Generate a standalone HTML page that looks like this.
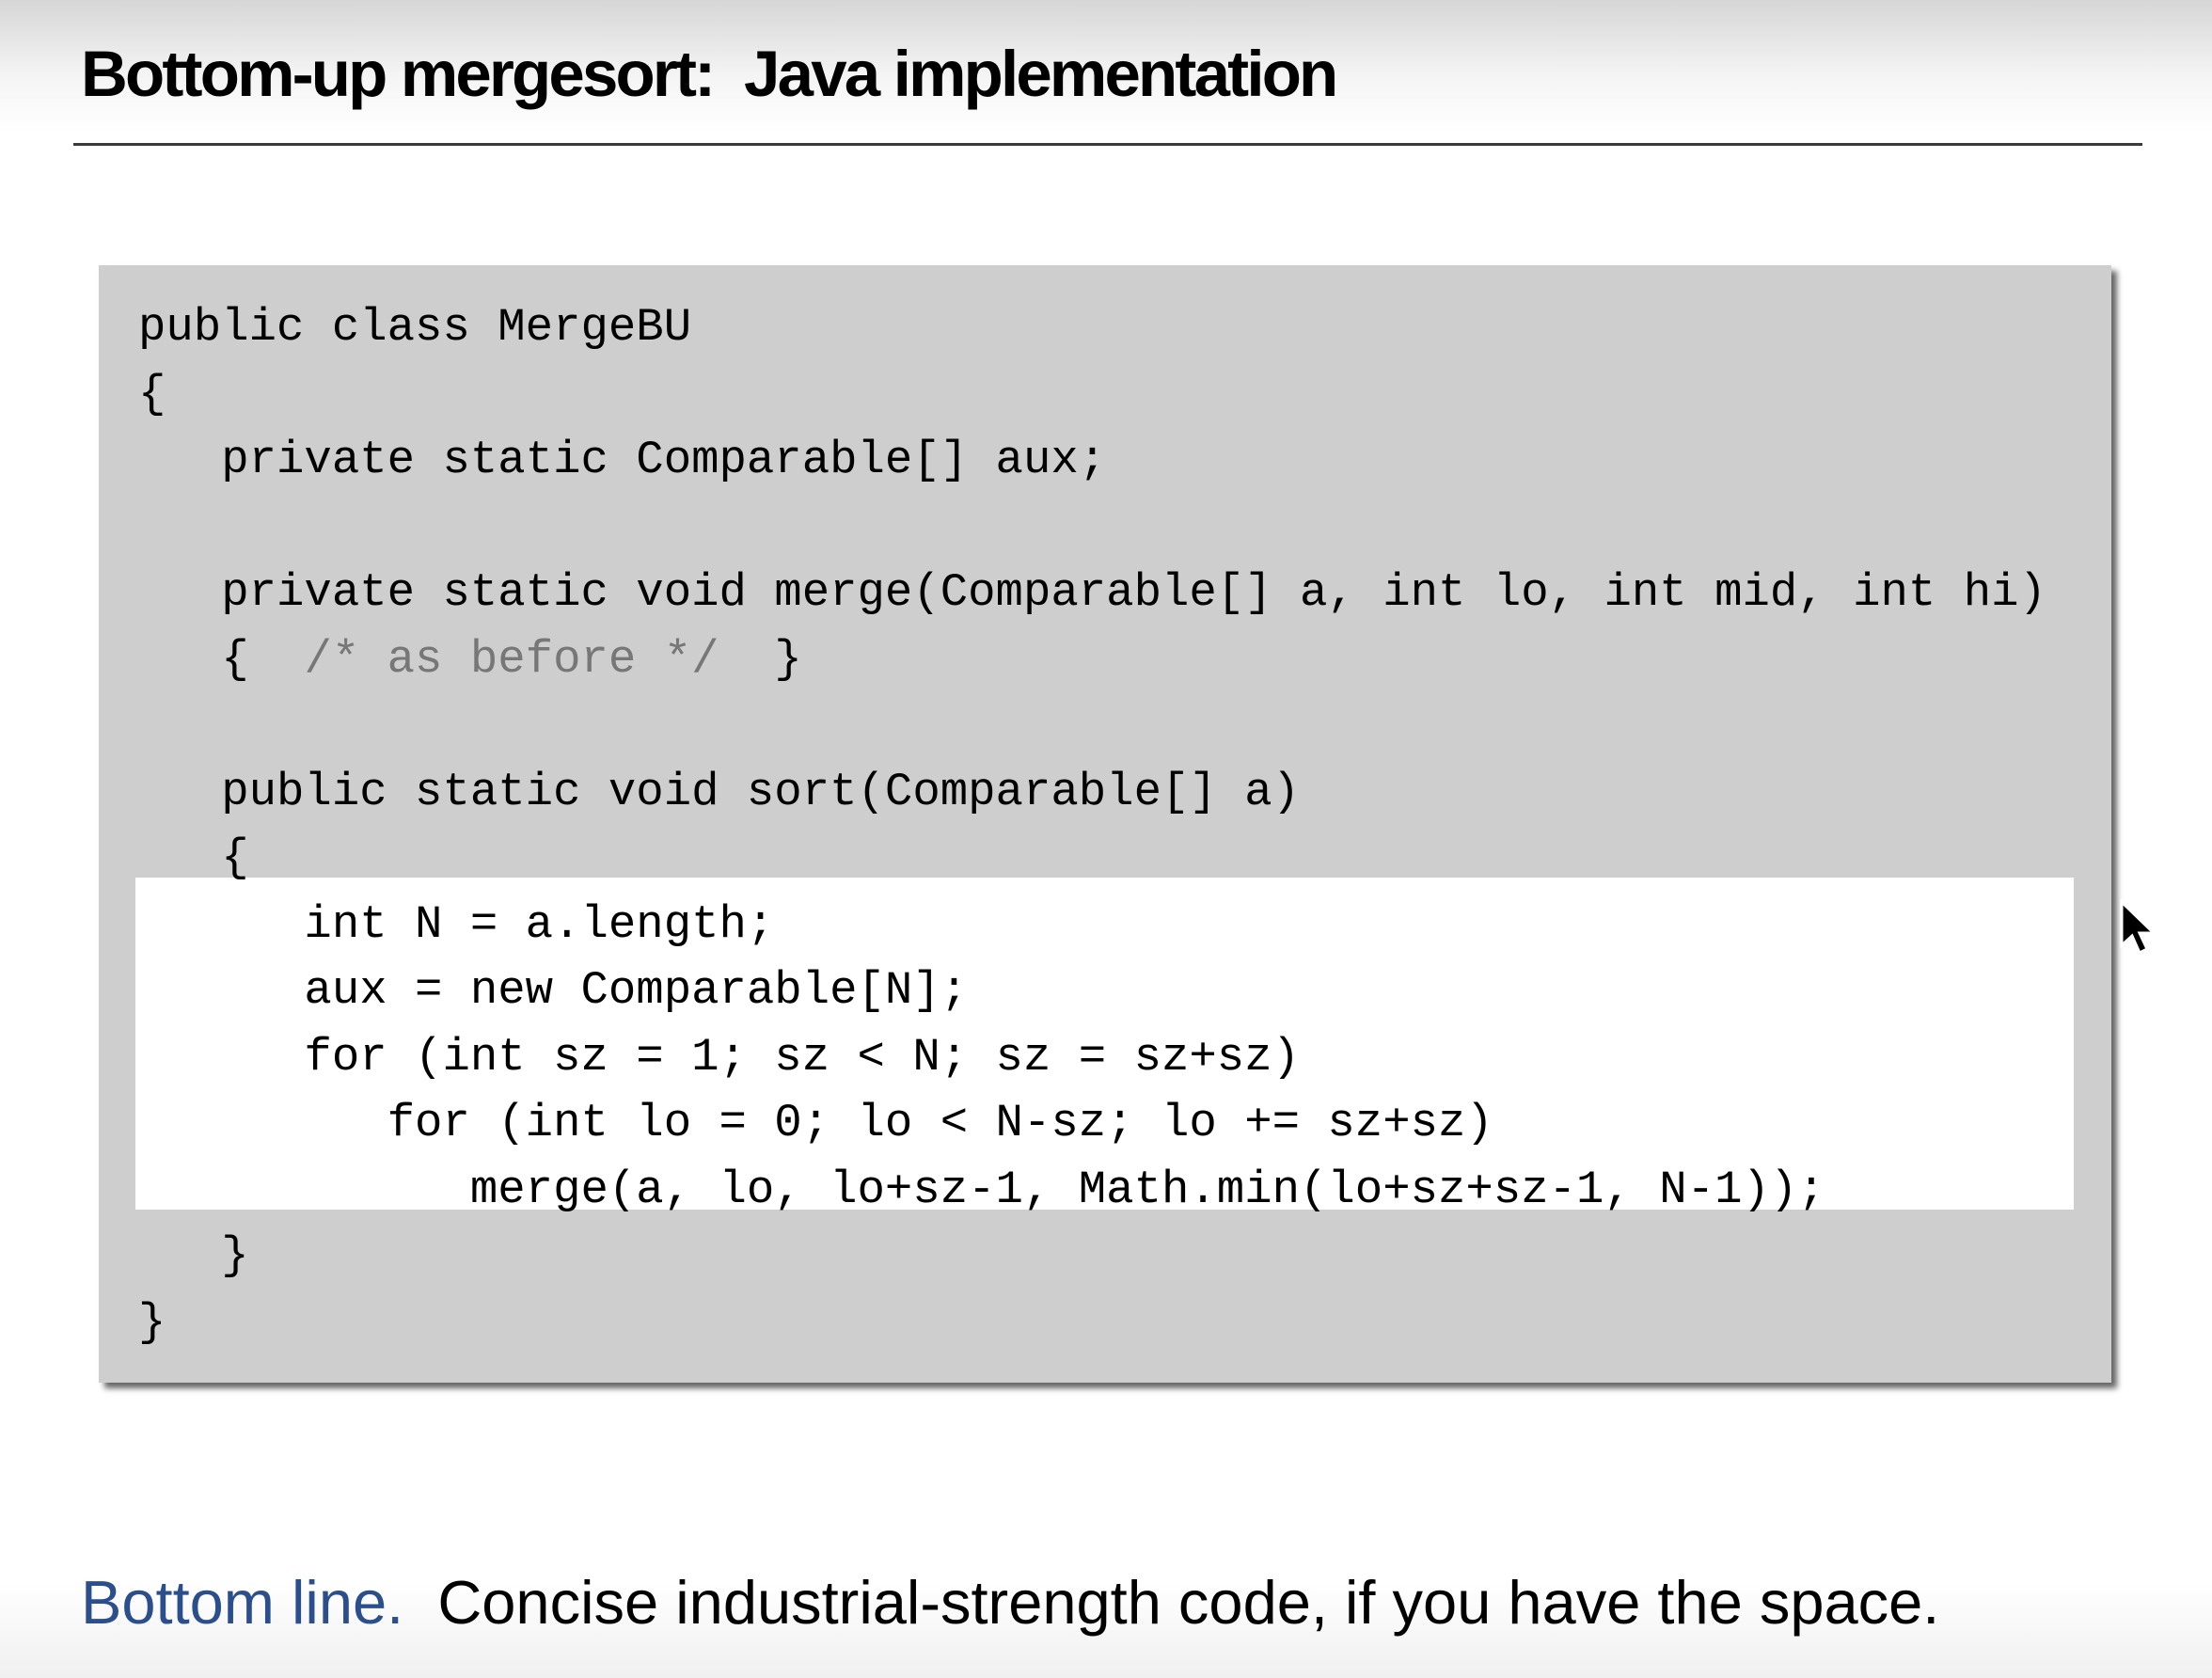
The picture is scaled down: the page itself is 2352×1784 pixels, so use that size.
<!DOCTYPE html>
<html><head><meta charset="utf-8"><style>
html,body{margin:0;padding:0}
body{width:2352px;height:1784px;position:relative;overflow:hidden;background:linear-gradient(#d6d6d6 0px,#f4f4f4 80px,#fff 140px,#fff 1680px,#f0f0f0 1784px);font-family:"Liberation Sans",sans-serif}
.title{position:absolute;left:86px;top:39px;font-size:69px;font-weight:bold;letter-spacing:-2.8px;color:#000;white-space:nowrap}
.rule{position:absolute;left:78px;top:152px;width:2200px;height:3px;background:#3a3a3a}
.box{position:absolute;left:105px;top:282px;width:2140px;height:1188px;background:#cecece;box-shadow:6px 6px 6px rgba(0,0,0,.6)}
.band{position:absolute;left:144px;top:933px;width:2061px;height:353px;background:#fff}
pre{position:absolute;left:147px;top:313px;margin:0;font-family:"Liberation Mono",monospace;font-size:49px;line-height:70.5px;color:#000}
.c{color:#777}
.bot{position:absolute;left:86px;top:1666px;font-size:65px;color:#000;white-space:nowrap}
.bot span{color:#2b4f8c}
</style></head><body>
<div class="title">Bottom-up mergesort:&nbsp; Java implementation</div>
<div class="rule"></div>
<div class="box"></div>
<div class="band"></div>
<pre>public class MergeBU
{
   private static Comparable[] aux;

   private static void merge(Comparable[] a, int lo, int mid, int hi)
   {  <span class="c">/* as before */</span>  }

   public static void sort(Comparable[] a)
   {
      int N = a.length;
      aux = new Comparable[N];
      for (int sz = 1; sz &lt; N; sz = sz+sz)
         for (int lo = 0; lo &lt; N-sz; lo += sz+sz)
            merge(a, lo, lo+sz-1, Math.min(lo+sz+sz-1, N-1));
   }
}</pre>
<svg style="position:absolute;left:2252px;top:955px" width="50" height="70" viewBox="0 0 50 70"><path d="M4 4 L4 50 L15 40 L23 58 L31 54 L23 37 L38 37 Z" fill="#000" stroke="#fff" stroke-width="3"/></svg>
<div class="bot"><span>Bottom line.</span>&nbsp; Concise industrial-strength code, if you have the space.</div>
</body></html>
